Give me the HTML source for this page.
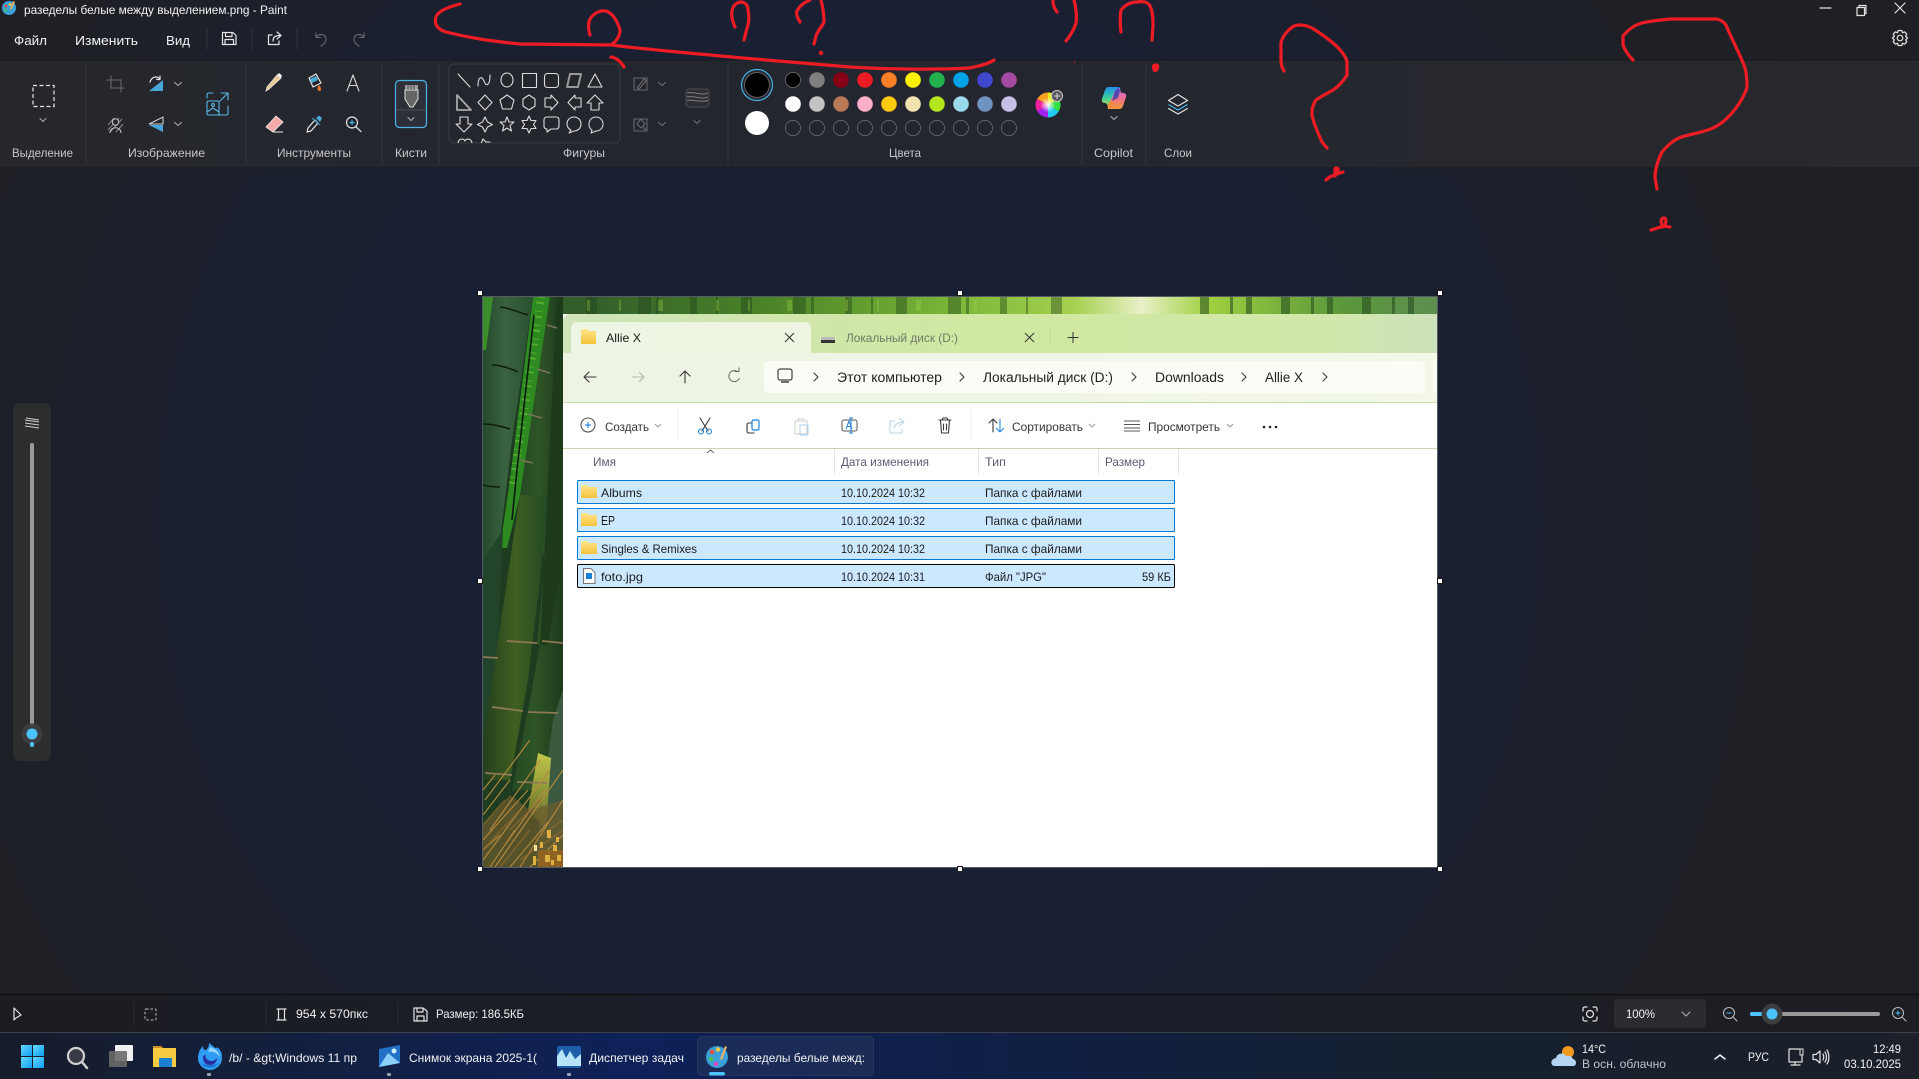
<!DOCTYPE html>
<html lang="ru"><head><meta charset="utf-8"><title>Paint</title>
<style>
html,body{margin:0;padding:0;background:#1c1f2a;overflow:hidden}
svg{display:block}
text{font-family:"Liberation Sans","Noto Sans CJK SC",sans-serif}
.w{fill:#f2f2f2;font-size:12px}
.l{fill:#c6c7ca;font-size:12px;text-anchor:start}
.e{fill:#1a1a1a;font-size:12px}
.ic{fill:none;stroke:#e4e4e4;stroke-width:1.2;stroke-linecap:round;stroke-linejoin:round}
.dim{fill:none;stroke:#66686c;stroke-width:1.1;stroke-linecap:round;stroke-linejoin:round}
.ch{fill:none;stroke:#a9abae;stroke-width:1.1;stroke-linecap:round;stroke-linejoin:round}
.sh{fill:none;stroke:#dcdcdc;stroke-width:1.1;stroke-linejoin:round;stroke-linecap:round}
.dk{fill:none;stroke:#3a3a3a;stroke-width:1.1;stroke-linecap:round;stroke-linejoin:round}
.lt{fill:none;stroke:#b8bcc0;stroke-width:1.1;stroke-linecap:round;stroke-linejoin:round}
.r{fill:none;stroke:#ed1c24;stroke-width:3.2;stroke-linecap:round;stroke-linejoin:round}
</style></head><body>
<svg width="1919" height="1079" viewBox="0 0 1919 1079" xmlns="http://www.w3.org/2000/svg">
<defs>
<radialGradient id="bg" gradientUnits="userSpaceOnUse" cx="850" cy="520" r="1080"><stop offset="0" stop-color="#181f36"/><stop offset=".5" stop-color="#1a2033"/><stop offset=".8" stop-color="#1d2027"/><stop offset="1" stop-color="#1f2024"/></radialGradient>
<linearGradient id="rib" x1="0" x2="1" y1="0" y2="0"><stop offset="0" stop-color="#25272c"/><stop offset=".5" stop-color="#23262f"/><stop offset="1" stop-color="#28292c"/></linearGradient>
<linearGradient id="stat" x1="0" x2="1" y1="0" y2="0"><stop offset="0" stop-color="#1b1d22"/><stop offset=".5" stop-color="#1a1e2a"/><stop offset="1" stop-color="#1d1e22"/></linearGradient>
<linearGradient id="task" x1="0" x2="1" y1="0" y2="0"><stop offset="0" stop-color="#171c2c"/><stop offset=".12" stop-color="#141f3a"/><stop offset=".33" stop-color="#0e2159"/><stop offset=".5" stop-color="#0f2048"/><stop offset=".75" stop-color="#16202f"/><stop offset="1" stop-color="#1b2029"/></linearGradient>
<linearGradient id="tabs" x1="0" x2="1" y1="0" y2="0"><stop offset="0" stop-color="#cfe4b8"/><stop offset=".5" stop-color="#d0e8a0"/><stop offset=".85" stop-color="#d2e8a8"/><stop offset="1" stop-color="#cde2ba"/></linearGradient>
<linearGradient id="nav" x1="0" x2="1" y1="0" y2="0"><stop offset="0" stop-color="#edf4e4"/><stop offset="1" stop-color="#f3f8e8"/></linearGradient>
<linearGradient id="acttab" x1="0" x2="1" y1="0" y2="0"><stop offset="0" stop-color="#edf5e4"/><stop offset="1" stop-color="#eef5e2"/></linearGradient>
<linearGradient id="strip" x1="0" x2="1" y1="0" y2="0"><stop offset="0" stop-color="#2f5428"/><stop offset=".12" stop-color="#34602a"/><stop offset=".3" stop-color="#4a8428"/><stop offset=".5" stop-color="#7cb838"/><stop offset=".62" stop-color="#a6d050"/><stop offset=".69" stop-color="#e8f0c8"/><stop offset=".76" stop-color="#a0d040"/><stop offset=".9" stop-color="#5a983a"/><stop offset="1" stop-color="#5d8e50"/></linearGradient>
<linearGradient id="st1" x1="0" x2="1" y1="0" y2="0"><stop offset="0" stop-color="#254a2c"/><stop offset=".45" stop-color="#3a6240"/><stop offset="1" stop-color="#2a5030"/></linearGradient>
<linearGradient id="st2" x1="0" x2="1" y1="0" y2="0"><stop offset="0" stop-color="#254a24"/><stop offset=".45" stop-color="#2f5426"/><stop offset="1" stop-color="#1c3a1c"/></linearGradient>
<linearGradient id="st3" x1="0" x2="1" y1="0" y2="0"><stop offset="0" stop-color="#233f1e"/><stop offset=".5" stop-color="#3f5f20"/><stop offset="1" stop-color="#234a24"/></linearGradient>
<linearGradient id="glow" x1="0" x2="0" y1="0" y2="1"><stop offset="0" stop-color="#c4c84a"/><stop offset="1" stop-color="#86862c" stop-opacity=".6"/></linearGradient>
<linearGradient id="folder" x1="0" x2="0" y1="0" y2="1"><stop offset="0" stop-color="#ffe58a"/><stop offset="1" stop-color="#f6c33c"/></linearGradient>
<linearGradient id="win" x1="0" x2="1" y1="0" y2="1"><stop offset="0" stop-color="#63dcff"/><stop offset="1" stop-color="#0f9bef"/></linearGradient>
<radialGradient id="wheelw"><stop offset="0" stop-color="#fff"/><stop offset=".85" stop-color="#fff" stop-opacity="0"/></radialGradient>
<linearGradient id="cp1" x1="0" x2="0" y1="0" y2="1"><stop offset="0" stop-color="#1f8ff0"/><stop offset=".5" stop-color="#3ccf9a"/><stop offset="1" stop-color="#f4d23a"/></linearGradient>
<linearGradient id="cp2" x1="0" x2="0" y1="0" y2="1"><stop offset="0" stop-color="#b06be8"/><stop offset=".5" stop-color="#f0708c"/><stop offset="1" stop-color="#f79a3a"/></linearGradient>
<clipPath id="cv"><rect x="483" y="297" width="80" height="570"/></clipPath>
<clipPath id="shp"><rect x="450" y="65" width="169" height="78" rx="4"/></clipPath>
</defs>

<rect width="1919" height="1079" fill="url(#bg)"/>

<!-- Title -->
<g>
<circle cx="9" cy="8" r="7" fill="#3aa0d8"/><circle cx="6" cy="6" r="1.4" fill="#f04a3a"/><circle cx="10" cy="4.500" r="1.4" fill="#f8c93a"/><circle cx="5.500" cy="10" r="1.4" fill="#4cc24c"/><path d="M13 1L15 2L11 10L10 9Z" fill="#e8b06a"/>
<text class="w" x="24" y="14" textLength="263" lengthAdjust="spacingAndGlyphs">разеделы белые между выделением.png - Paint</text>
<text class="w" x="14" y="45" style="font-size:13px" textLength="33" lengthAdjust="spacingAndGlyphs">Файл</text>
<text class="w" x="75" y="45" style="font-size:13px" textLength="63" lengthAdjust="spacingAndGlyphs">Изменить</text>
<text class="w" x="166" y="45" style="font-size:13px" textLength="24" lengthAdjust="spacingAndGlyphs">Вид</text>
<path d="M207 27V50M252 27V50M297 27V50" stroke="#303237"/>
<path class="ic" d="M222.500 32.500H233L236 35.500V44.500H222.500ZM225.500 32.500V36.500H232V32.500M225 44.500V39.500H233.500V44.500"/>
<path class="ic" d="M272 35H268.500V44.500H279V41M273 41C273 36.500 276 35.500 279.500 35.500M277 32L281 35.500L277 39"/>
<path class="dim" d="M316 33V37.500H320.500M316 37C319 33.500 326 33.500 326 39.500C326 42 324.500 44 321 46"/>
<path class="dim" d="M364 33V37.500H359.500M364 37C361 33.500 354 33.500 354 39.500C354 42 355.500 44 359 46"/>
<path class="ic" d="M1820 8H1831" stroke-width="1"/>
<path class="ic" d="M1857 7.500H1864.500V15.500H1857ZM1859 7.500V5.500H1866V13.500H1864.500"/>
<path class="ic" d="M1895 3L1905 13M1905 3L1895 13"/>
<g transform="translate(1900 38)"><circle r="2.800" class="ic"/><path class="ic" d="M-1.800-7.500H1.800L2.500-5.200L4.600-6.200L6.800-3.800L5.600-1.800L7.600 0L5.600 1.800L6.800 3.800L4.600 6.200L2.500 5.200L1.800 7.500H-1.800L-2.500 5.200L-4.600 6.200L-6.800 3.800L-5.600 1.800L-7.600 0L-5.600-1.800L-6.800-3.800L-4.600-6.200L-2.500-5.200Z"/></g>
</g>

<!-- Ribbon -->
<rect x="0" y="60" width="1919" height="108" fill="url(#rib)"/>
<path d="M0 60H1919M0 168H1919" stroke="#17181b"/>
<path d="M86 64V164M246 64V164M382 64V164M439 64V164M728 64V164M1082 64V164M1146 64V164" stroke="#34363c"/>
<g>
<text class="l" x="12" y="157" textLength="61" lengthAdjust="spacingAndGlyphs">Выделение</text>
<text class="l" x="128" y="157" textLength="77" lengthAdjust="spacingAndGlyphs">Изображение</text>
<text class="l" x="277" y="157" textLength="74" lengthAdjust="spacingAndGlyphs">Инструменты</text>
<text class="l" x="395" y="157" textLength="32" lengthAdjust="spacingAndGlyphs">Кисти</text>
<text class="l" x="563" y="157" textLength="42" lengthAdjust="spacingAndGlyphs">Фигуры</text>
<text class="l" x="889" y="157" textLength="32" lengthAdjust="spacingAndGlyphs">Цвета</text>
<text class="l" x="1094" y="157" textLength="39" lengthAdjust="spacingAndGlyphs">Copilot</text>
<text class="l" x="1164" y="157" textLength="28" lengthAdjust="spacingAndGlyphs">Слои</text>
</g>
<rect x="33" y="85.500" width="21" height="21" fill="none" stroke="#e6e6e6" stroke-width="1.200" stroke-dasharray="4 2.500"/>
<path class="ch" transform="translate(43 120)" d="M-3-1.500L0 1.500L3-1.500"/>
<!-- image group -->
<path class="dim" d="M107 80H121V92M111 76V88H124"/>
<path d="M149 91L163 80V91Z" fill="#4aa8d8"/><path class="ic" d="M150 82C152 76 157 76 160 79M160 76V79.500H156.500"/>
<path class="ch" transform="translate(178 84)" d="M-3.500-1.500L0 1.500L3.500-1.500"/>
<g fill="none" stroke="#8a8c90" stroke-width="1"><path d="M108 125L114 118M108 130L119 118M110 132L122 119M116 132L123 124"/><circle cx="115.500" cy="122" r="3.200" fill="#26282d" stroke="#c8c8c8"/><path stroke="#c8c8c8" d="M110 133C110 126 121 126 121 133"/></g>
<path d="M149 124L163 117V124Z" fill="none" stroke="#d8d8d8"/><path d="M149 125L163 125V132Z" fill="#4aa8d8"/>
<path class="ch" transform="translate(178 124)" d="M-3.500-1.500L0 1.500L3.500-1.500"/>
<g fill="none" stroke="#5ab8e8" stroke-width="1.100" stroke-linecap="round" stroke-linejoin="round"><path d="M207 98V95Q207 93 209 93H213M218 115H226Q228 115 228 113V106"/><path d="M221 93H228V100M228 93L220 101"/><rect x="207" y="101" width="12" height="14" rx="1.500"/><circle cx="213" cy="105" r="1.400"/><path d="M207 112L213 108L219 112"/></g>
<!-- tools -->
<path d="M269 89L266 91L267 87L277 75L281 78Z" fill="#e6c98c" stroke="#eee" stroke-width=".8"/><path d="M277 75L279 73L282 75.500L281 78Z" fill="#f0f0f0"/>
<path class="ic" d="M309 78L316 74L321 83L313 87Z" stroke-width="1"/><path d="M310 79L316 76L318 80L312 83Z" fill="#4aa8d8"/><path d="M319 85C316 89 318 91 319.500 91C321 91 322.500 89 319 85Z" fill="#f0762a"/>
<path class="lt" style="stroke:#d8d8d8" d="M347 91L353 75L359 91M349 85.500H357"/>
<path d="M266 127L276 116L283 122L273 132Z" fill="#f4a8a8" stroke="#eee" stroke-width=".8"/><path d="M273 132H283" stroke="#eee"/>
<path class="ic" d="M307 132L308 128L315 120L318 123L311 131Z"/><path d="M316 118L319 115.500L322 118L320 122Z" fill="#4aa8d8"/><path d="M312 118L320 125" stroke="#4aa8d8"/>
<circle cx="352" cy="122.500" r="5.500" class="ic"/><path class="ic" d="M356 127L361 131.500"/><path d="M349.500 122.500H354.500M352 120V125" stroke="#4ac2ff"/>
<!-- brushes -->
<rect x="395.500" y="80.500" width="31" height="47" rx="4" fill="#2d3038" stroke="#4ab4ea" stroke-width="1.200"/>
<path d="M396 110H426" stroke="#4a4c52"/>
<path d="M405 85H418V90H405Z" fill="#999"/><path d="M405 90H418V99L413 107H410L405 99Z" fill="#666" stroke="#e0e0e0" stroke-width="1"/><path d="M408 85V90M411 85V90M414 85V90" stroke="#555"/>
<path class="ch" transform="translate(411 119)" d="M-3-1.500L0 1.500L3-1.500"/>
<!-- shapes -->
<rect x="449" y="64" width="171" height="79" rx="5" fill="none" stroke="#3a3c42"/>
<g class="sh" clip-path="url(#shp)">
<path d="M458 74L470 87"/>
<path d="M478 86C478 76 482 76 484 81C486 87 490 86 490 75"/>
<ellipse cx="507" cy="80" rx="6" ry="7"/>
<rect x="522.500" y="73.500" width="14" height="14"/>
<rect x="544.500" y="73.500" width="14" height="14" rx="3"/>
<path d="M570 74H581L578 87H567Z" stroke="#999" stroke-width="2"/>
<path d="M595 74L602 87H588Z"/>
<path d="M457 95V110H471Z" stroke="#aaa" stroke-width="1.800"/>
<path d="M485 95L492 102.500L485 110L478 102.500Z"/>
<path d="M507 95L514 100L511.500 109H502.500L500 100Z"/>
<path d="M529 95L535 99V106L529 110L523 106V99Z"/>
<path d="M545 98H551V95L558 102.500L551 110V107H545Z"/>
<path d="M581 98H575V95L568 102.500L575 110V107H581Z"/>
<path d="M595 95L603 103H599V110H591V103H587Z"/>
<path d="M460 117H468V124H472L464 132L456 124H460Z"/>
<path d="M485 117L487.500 122L492.500 124.500L487.500 127L485 132L482.500 127L477.500 124.500L482.500 122Z"/>
<path d="M507 117L509 122H514L510 125.500L511.500 131L507 128L502.500 131L504 125.500L500 122H505Z"/>
<path d="M529 116L531 120.500H536L533.500 124.500L536 128.500H531L529 133L527 128.500H522L524.500 124.500L522 120.500H527Z"/>
<path d="M547 117H556Q559 117 559 120V126Q559 129 556 129H551L547 132V129Q544 129 544 126V120Q544 117 547 117Z"/>
<path d="M574 117C570 117 567 120 567 124C567 127 569 129 571 130L569 133L574 131C578 131 581 128 581 124C581 120 578 117 574 117Z"/>
<path d="M596 117C592 117 589 120 589 124C589 127 590 129 592 130L591 133L596 131C600 131 603 128 603 124C603 120 600 117 596 117Z" stroke-dasharray="2.500 1"/>
<path d="M458 144C458 138 464 138 465 141C466 138 472 138 472 144"/>
<path d="M480 146L483 139L486 142H490"/>
</g>
<path class="dim" d="M634 78H647V90H634ZM637 88L644 79L646 81L639 89Z"/>
<path class="ch" style="stroke:#6d6f73" transform="translate(662 84)" d="M-3.500-1.500L0 1.500L3.500-1.500"/>
<path class="dim" d="M634 119H647V131H634ZM637 124L641 119L645 124L641 128ZM644 127C643 129 645 130 646 129"/>
<path class="ch" style="stroke:#6d6f73" transform="translate(662 124)" d="M-3.500-1.500L0 1.500L3.500-1.500"/>
<rect x="686" y="89" width="23" height="18" rx="3" fill="#2c2e33" stroke="#4a4c50"/>
<path d="M687 93C694 91 700 96 708 93M687 97C694 95 700 100 708 97M687 100.500C694 99 700 103 708 100.500" fill="none" stroke="#7c7e82"/>
<path class="ch" style="stroke:#6d6f73" transform="translate(697 122)" d="M-3-1.500L0 1.500L3-1.500"/>
<!-- colours -->
<circle cx="757" cy="85" r="15.500" fill="none" stroke="#45b0e4" stroke-width="1.200"/><circle cx="757" cy="85" r="12.500" fill="#000" stroke="#606266" stroke-width="1"/>
<circle cx="757" cy="123" r="12" fill="#fff"/>
<g stroke="#5e6064" stroke-width="1">
<circle cx="793" cy="80" r="7.600" fill="#000"/><circle cx="817" cy="80" r="7.800" fill="#7f7f7f" stroke="none"/><circle cx="841" cy="80" r="7.800" fill="#880015" stroke="none"/><circle cx="865" cy="80" r="7.800" fill="#ed1c24" stroke="none"/><circle cx="889" cy="80" r="7.800" fill="#ff7f27" stroke="none"/><circle cx="913" cy="80" r="7.800" fill="#fff200" stroke="none"/><circle cx="937" cy="80" r="7.800" fill="#22b14c" stroke="none"/><circle cx="961" cy="80" r="7.800" fill="#00a2e8" stroke="none"/><circle cx="985" cy="80" r="7.800" fill="#3f48cc" stroke="none"/><circle cx="1009" cy="80" r="7.800" fill="#a349a4" stroke="none"/>
<circle cx="793" cy="104" r="7.800" fill="#fff" stroke="none"/><circle cx="817" cy="104" r="7.800" fill="#c3c3c3" stroke="none"/><circle cx="841" cy="104" r="7.800" fill="#b97a57" stroke="none"/><circle cx="865" cy="104" r="7.800" fill="#ffaec9" stroke="none"/><circle cx="889" cy="104" r="7.800" fill="#ffc90e" stroke="none"/><circle cx="913" cy="104" r="7.800" fill="#efe4b0" stroke="none"/><circle cx="937" cy="104" r="7.800" fill="#b5e61d" stroke="none"/><circle cx="961" cy="104" r="7.800" fill="#99d9ea" stroke="none"/><circle cx="985" cy="104" r="7.800" fill="#7092be" stroke="none"/><circle cx="1009" cy="104" r="7.800" fill="#c8bfe7" stroke="none"/>
<g fill="none"><circle cx="793" cy="128" r="7.600"/><circle cx="817" cy="128" r="7.600"/><circle cx="841" cy="128" r="7.600"/><circle cx="865" cy="128" r="7.600"/><circle cx="889" cy="128" r="7.600"/><circle cx="913" cy="128" r="7.600"/><circle cx="937" cy="128" r="7.600"/><circle cx="961" cy="128" r="7.600"/><circle cx="985" cy="128" r="7.600"/><circle cx="1009" cy="128" r="7.600"/></g>
</g>
<g transform="translate(1048 105)">
<path d="M0 0L0-12.500A12.500 12.500 0 0 1 10.800-6.200Z" fill="#e8ee20"/><path d="M0 0L10.800-6.200A12.500 12.500 0 0 1 10.800 6.200Z" fill="#30e040"/><path d="M0 0L10.800 6.200A12.500 12.500 0 0 1 0 12.500Z" fill="#20c8f0"/><path d="M0 0L0 12.500A12.500 12.500 0 0 1-10.800 6.200Z" fill="#a020f0"/><path d="M0 0L-10.800 6.200A12.500 12.500 0 0 1-10.800-6.200Z" fill="#f020a0"/><path d="M0 0L-10.800-6.200A12.500 12.500 0 0 1 0-12.500Z" fill="#f8a020"/><circle r="9" fill="url(#wheelw)"/>
</g>
<circle cx="1057" cy="96" r="5.500" fill="#55575a" stroke="#c8c8c8" stroke-width="1"/><path d="M1054 96H1060M1057 93V99" stroke="#d8d8d8"/>
<!-- copilot -->
<path d="M1109 87H1118Q1121 87 1120 90L1113 106Q1112 109 1108 109Q1108 103 1105 103Q1101 103 1102 99L1105 90Q1106 87 1109 87Z" fill="url(#cp1)"/>
<path d="M1119 109H1110Q1107 109 1108 106L1115 91Q1116 88 1120 88Q1120 93 1123 93Q1127 93 1126 97L1123 106Q1122 109 1119 109Z" fill="url(#cp2)"/>
<path d="M1115 91L1118 88L1120 90L1118 98L1112 101Z" fill="#2a3ca8" opacity=".75"/>
<path d="M1108 105L1112 100L1114 104L1111 109Z" fill="#f08a3a" opacity=".9"/>
<path class="ch" transform="translate(1114 118)" d="M-3-1.500L0 1.500L3-1.500"/>
<path class="ic" d="M1178 94.500L1187.500 100.500L1178 106L1168.500 100.500Z"/><path d="M1168.500 104.500L1178 110L1187.500 104.500" fill="none" stroke="#4ab4ea" stroke-width="1.200"/><path class="ic" d="M1168.500 108.500L1178 114L1187.500 108.500"/>

<!-- Slider panel -->
<rect x="13" y="403" width="38" height="358" rx="7" fill="#2c2d2f"/>
<path d="M25 420L39 422M25 423L39 425M25 426L39 428M26 418L39 420" stroke="#d0d0d0" stroke-width="1"/>
<rect x="30" y="443" width="4" height="290" rx="2" fill="#9a9a9a"/>
<circle cx="32" cy="734" r="10.500" fill="#3c3d3f"/><circle cx="32" cy="734" r="5.500" fill="#4cc2ff"/>
<rect x="30" y="742" width="4" height="5" rx="2" fill="#4cc2ff"/>

<!-- Canvas -->
<rect x="482.500" y="296.500" width="955" height="571" fill="#fff" stroke="#555a66"/>
<rect x="483" y="297" width="954" height="17" fill="url(#strip)"/>
<path d="M483 305.500H1100" stroke="#1f3f1c" stroke-width="17" stroke-dasharray="13 5 3 31 7 19 2 23 11 41" opacity=".4"/>
<path d="M490 305.500H1000" stroke="#a8d848" stroke-width="11" stroke-dasharray="2 37 5 53 3 29" opacity=".3"/>
<path d="M1200 305.500H1437" stroke="#234a1e" stroke-width="17" stroke-dasharray="9 21 3 13 6 29" opacity=".55"/>
<g clip-path="url(#cv)">
<rect x="483" y="297" width="80" height="570" fill="#1e3c20"/>
<!-- upper gap -->
<path d="M533 297H550L520 495L507 548H500L510 480Z" fill="#2c8a20"/>
<path d="M541 297L512 490" stroke="#8ed440" stroke-width="8" stroke-dasharray="1 4 2 7" opacity=".45"/>
<path d="M534 315L517 470L512 520" stroke="#0b1a0e" stroke-width="1.600" fill="none"/>
<!-- left stalk -->
<path d="M483 297H533L512 440L500 540L483 640Z" fill="url(#st1)"/>
<path d="M483 297H493L486 350H483Z" fill="#3a8e2a"/>
<!-- right upper stalk -->
<path d="M550 297H563V645H537L545 560L520 495Z" fill="url(#st2)"/>
<path d="M557 297H563V560L548 645H540Z" fill="#1d3a1a"/>
<g stroke="#0f1c0d" stroke-width="1.500" fill="none"><path d="M500 307C510 308 520 313 528 315M492 365C500 365 512 369 518 372M483 424C495 424 503 427 510 429M483 485C490 487 495 487 500 487"/></g>
<g stroke="#7a7458" stroke-width="1.500" fill="none"><path d="M547 325L557 328M537 369L550 373M528 414L542 418M520 460L533 463"/></g>
<!-- lower stalks -->
<path d="M520 495H547L540 580L528 680L510 780H483V740L498 640Z" fill="url(#st3)"/>
<path d="M483 560L503 530L498 640L483 740Z" fill="#22442a"/>
<path d="M540 645H563V700L550 790H512L530 700Z" fill="url(#st2)"/>
<path d="M553 720L563 690V860H535Z" fill="#3c5a40"/>
<path d="M528 810L538 753L551 758L546 830Z" fill="url(#glow)"/>
<g stroke="#8c7a54" stroke-width="1.800" fill="none"><path d="M507 641L537 643M542 641L563 643M483 657L498 658M492 707L523 711M528 712L558 713M485 773L512 775M517 782L547 783"/></g>
<!-- grass -->
<path d="M483 825L510 795L530 810L563 800V867H483Z" fill="#6c5a2c" opacity=".7"/>
<g stroke="#b58a40" stroke-width="1.100" fill="none"><path d="M485 800L530 740M490 830L540 760M483 860L550 770M500 860L563 770M520 867L563 800M483 815L510 780M495 867L535 810M483 840L528 790M510 867L550 820M483 790L495 775M490 867L515 830M483 850L500 835M505 845L545 790M530 867L563 835"/></g>
<g stroke="#8c6a30" stroke-width="2" fill="none" opacity=".6"><path d="M483 850L520 810M500 867L530 830M535 840L563 820M520 860L563 830M483 825L505 800M510 830L540 800"/></g>
<rect x="538" y="850" width="25" height="17" fill="#8e6220"/>
<g fill="#e0b040"><rect x="547" y="830" width="4" height="8"/><rect x="540" y="842" width="3" height="6"/><rect x="553" y="845" width="4" height="6"/><rect x="545" y="855" width="5" height="7"/><rect x="556" y="837" width="3" height="5"/><rect x="533" y="856" width="3" height="9"/><rect x="534" y="845" width="3" height="6" fill="#f4e0a0"/><rect x="557" y="855" width="4" height="6"/><rect x="551" y="860" width="3" height="5"/></g>
</g>
<!-- Explorer -->
<path d="M563 322Q563 314 571 314H1437V353H563Z" fill="url(#tabs)"/>
<path d="M571 353V329Q571 322 578 322H804Q811 322 811 329V353Z" fill="url(#acttab)"/>
<rect x="563" y="353" width="874" height="49" fill="url(#nav)"/>
<rect x="764" y="361" width="661" height="32" rx="4" fill="#fafcf5"/>
<rect x="1433" y="361" width="4" height="32" fill="#fafcf5"/>
<path d="M563 402.500H1437" stroke="#c8dca8"/>
<rect x="563" y="403" width="874" height="464" fill="#fff"/>
<path d="M563 448.500H1437" stroke="#c9d5ae"/>
<path d="M581 331Q581 329 583 329H587L589 331H596V344H581Z" fill="url(#folder)"/>
<text class="e" x="606" y="342" textLength="35" lengthAdjust="spacingAndGlyphs">Allie X</text>
<path d="M785 333L794 342M794 333L785 342" stroke="#333" fill="none"/>
<rect x="821" y="337" width="14" height="3" rx="1" fill="#bbb"/><rect x="821" y="340" width="14" height="3" fill="#333"/>
<text x="846" y="342" style="font-size:12px;fill:#6f7a66" textLength="112" lengthAdjust="spacingAndGlyphs">Локальный диск (D:)</text>
<path d="M1025 333L1034 342M1034 333L1025 342" stroke="#333" fill="none"/>
<path d="M1050 329V345" stroke="#c2d89c"/>
<path d="M1073 332V343M1067.500 337.500H1078.500" stroke="#333" fill="none"/>
<path class="dk" d="M584 377H596M584 377L589 372M584 377L589 382"/>
<path d="M632 377H644M644 377L639 372M644 377L639 382" fill="none" stroke="#b4b8b0" stroke-width="1.100"/>
<path class="dk" d="M685 383V371M685 371L680 376M685 371L690 376"/>
<path d="M738 372A5.500 5.500 0 1 0 739.500 378M734.500 371.500H739V367.500" fill="none" stroke="#666" stroke-width="1"/>
<rect x="778" y="369" width="14" height="11" rx="2" fill="none" stroke="#444" stroke-width="1.200"/><path d="M781 382H789" stroke="#444" stroke-width="1.500"/>
<g class="dk"><path d="M814 373L818 377L814 381M960 373L964 377L960 381M1132 373L1136 377L1132 381M1242 373L1246 377L1242 381M1323 373L1327 377L1323 381"/></g>
<text x="837" y="382" style="font-size:13.500px;fill:#222" textLength="105" lengthAdjust="spacingAndGlyphs">Этот компьютер</text>
<text x="983" y="382" style="font-size:13.500px;fill:#222" textLength="130" lengthAdjust="spacingAndGlyphs">Локальный диск (D:)</text>
<text x="1155" y="382" style="font-size:13.500px;fill:#222" textLength="69" lengthAdjust="spacingAndGlyphs">Downloads</text>
<text x="1265" y="382" style="font-size:13.500px;fill:#222" textLength="38" lengthAdjust="spacingAndGlyphs">Allie X</text>
<!-- toolbar -->
<circle cx="588" cy="425" r="7" fill="none" stroke="#555" stroke-width="1.100"/><path d="M585 425H591M588 422V428" stroke="#0a74d4" fill="none"/>
<text class="e" x="605" y="431" style="fill:#333" textLength="44" lengthAdjust="spacingAndGlyphs">Создать</text>
<path d="M655 424L658 427L661 424" fill="none" stroke="#999"/>
<path d="M678 410V441M971 410V441" stroke="#ececec"/>
<path class="dk" d="M700 418L708 431M710 418L702 431"/><circle cx="701" cy="431.500" r="2.500" fill="none" stroke="#1a80d8"/><circle cx="709" cy="431.500" r="2.500" fill="none" stroke="#1a80d8"/>
<rect x="752" y="420" width="7" height="10" rx="1.500" fill="none" stroke="#1a80d8" stroke-width="1.200"/><path class="dk" d="M751 423H749Q747 423 747 425V431Q747 433 749 433H754"/>
<path d="M795 421H807V434H795ZM798 421V419H804V421" fill="none" stroke="#ccd0d0"/><rect x="800" y="425" width="8" height="10" rx="1" fill="none" stroke="#a8d0f0"/>
<rect x="842" y="420" width="15" height="11" rx="2" fill="none" stroke="#555"/><path d="M846 429L849 421L852 429M847 426.500H851" fill="none" stroke="#1a80d8"/><path d="M851 418V433M849 418H853M849 433H853" stroke="#1a80d8" fill="none"/>
<path d="M890 421H895M890 421V433H902V429M894 428C895 424 899 422 903 422M899 418L904 422L899 426" fill="none" stroke="#bcd4e8" stroke-width="1.100"/>
<path class="dk" d="M939 420H951M942 420L943 418H947L948 420M940.500 420L941.500 433H948.500L949.500 420M943.500 424V430M946.500 424V430" stroke-width="1"/>
<path class="dk" d="M993 420V432M993 419L989 423M993 419L997 423"/><path d="M1000 419V431M1000 432L996 428M1000 432L1004 428" fill="none" stroke="#1a80d8"/>
<text class="e" x="1012" y="431" style="fill:#333" textLength="71" lengthAdjust="spacingAndGlyphs">Сортировать</text>
<path d="M1089 424L1092 427L1095 424" fill="none" stroke="#999"/>
<path d="M1124 421H1140M1124 424.500H1140M1124 428H1140M1124 431H1140" stroke="#555" fill="none"/>
<text class="e" x="1148" y="431" style="fill:#333" textLength="72" lengthAdjust="spacingAndGlyphs">Просмотреть</text>
<path d="M1227 424L1230 427L1233 424" fill="none" stroke="#999"/>
<circle cx="1264" cy="427" r="1.300" fill="#222"/><circle cx="1270" cy="427" r="1.300" fill="#222"/><circle cx="1276" cy="427" r="1.300" fill="#222"/>
<!-- header -->
<path d="M707 453L710.500 450L714 453" fill="none" stroke="#666"/>
<path d="M834.500 449V474M978.500 449V474M1098.500 449V474M1178.500 449V474" stroke="#e2e4de"/>
<text x="593" y="466" style="font-size:12px;fill:#5a5c70" textLength="23" lengthAdjust="spacingAndGlyphs">Имя</text>
<text x="841" y="466" style="font-size:12px;fill:#5a5c70" textLength="88" lengthAdjust="spacingAndGlyphs">Дата изменения</text>
<text x="985" y="466" style="font-size:12px;fill:#5a5c70" textLength="21" lengthAdjust="spacingAndGlyphs">Тип</text>
<text x="1105" y="466" style="font-size:12px;fill:#5a5c70" textLength="40" lengthAdjust="spacingAndGlyphs">Размер</text>
<!-- rows -->
<rect x="577.500" y="480.500" width="597" height="23" rx="1" fill="#cce8ff" stroke="#0078d7"/>
<rect x="577.500" y="508.500" width="597" height="23" rx="1" fill="#cce8ff" stroke="#0078d7"/>
<rect x="577.500" y="536.500" width="597" height="23" rx="1" fill="#cce8ff" stroke="#0078d7"/>
<rect x="577.500" y="564.500" width="597" height="23" rx="1" fill="#cce8ff" stroke="#000"/>
<path d="M581 487Q581 485 583 485H587L589 487H597V498H581Z" fill="url(#folder)"/>
<path d="M581 515Q581 513 583 513H587L589 515H597V526H581Z" fill="url(#folder)"/>
<path d="M581 543Q581 541 583 541H587L589 543H597V554H581Z" fill="url(#folder)"/>
<path d="M583.500 568.500H591L595 572.500V583.500H583.500Z" fill="#fff" stroke="#777"/><rect x="586" y="573" width="6" height="6" fill="#1a80d8"/>
<text class="e" x="601" y="497" textLength="41" lengthAdjust="spacingAndGlyphs">Albums</text>
<text class="e" x="601" y="525" textLength="14" lengthAdjust="spacingAndGlyphs" style="font-size:13px">EP</text>
<text class="e" x="601" y="553" textLength="96" lengthAdjust="spacingAndGlyphs">Singles &amp; Remixes</text>
<text class="e" x="601" y="581" textLength="42" lengthAdjust="spacingAndGlyphs">foto.jpg</text>
<text class="e" x="841" y="497" textLength="84" lengthAdjust="spacingAndGlyphs">10.10.2024 10:32</text>
<text class="e" x="841" y="525" textLength="84" lengthAdjust="spacingAndGlyphs">10.10.2024 10:32</text>
<text class="e" x="841" y="553" textLength="84" lengthAdjust="spacingAndGlyphs">10.10.2024 10:32</text>
<text class="e" x="841" y="581" textLength="84" lengthAdjust="spacingAndGlyphs">10.10.2024 10:31</text>
<text class="e" x="985" y="497" textLength="97" lengthAdjust="spacingAndGlyphs">Папка с файлами</text>
<text class="e" x="985" y="525" textLength="97" lengthAdjust="spacingAndGlyphs">Папка с файлами</text>
<text class="e" x="985" y="553" textLength="97" lengthAdjust="spacingAndGlyphs">Папка с файлами</text>
<text class="e" x="985" y="581" textLength="61" lengthAdjust="spacingAndGlyphs">Файл "JPG"</text>
<text class="e" x="1142" y="581" textLength="29" lengthAdjust="spacingAndGlyphs">59 КБ</text>
<!-- handles -->
<g fill="#fff" stroke="#1a1a1a">
<rect x="477.500" y="290.500" width="5" height="5"/><rect x="957.500" y="290.500" width="5" height="5"/><rect x="1437.500" y="290.500" width="5" height="5"/>
<rect x="477.500" y="578.500" width="5" height="5"/><rect x="1437.500" y="578.500" width="5" height="5"/>
<rect x="477.500" y="866.500" width="5" height="5"/><rect x="957.500" y="866.500" width="5" height="5"/><rect x="1437.500" y="866.500" width="5" height="5"/>
</g>

<!-- Scribbles -->
<g class="r">
<path d="M460 4C448 7 438 11 436 17C434 24 437 29 446 32C470 38 490 41 520 44L611 45C650 50 690 53 743 58C770 60 800 63 850 67C880 69 930 70 969 68C980 66 988 64 994 60"/>
<path d="M590 35C588 28 588 23 590 19C594 13 600 10 606 11C612 13 617 20 620 30C620 36 616 42 611 45"/>
<path d="M611 57C617 58 621 62 624 67"/>
<path d="M735 27C732 20 731 15 732 11C733 5 737 2 742 2C746 3 748 6 748 10C750 20 748 25 746 32L744 40"/>
<path d="M800 22C797 17 796 13 797 11C800 5 805 2 810 0M821 0C823 8 824 15 824 22C821 28 817 32 816 36L814 44"/>
<circle cx="821" cy="53" r="1" stroke-width="2.500"/>
<path d="M1057 12C1054 8 1053 5 1053 1M1074 0C1076 8 1077 16 1076 23C1074 30 1070 36 1066 41"/>
<path d="M1121 32C1120 24 1120 16 1121 10C1126 4 1132 2 1137 2C1143 1 1148 2 1150 6C1153 12 1153 20 1153 26L1152 40"/>
<path d="M1154 66C1156 65 1158 65 1157 68C1156 71 1154 71 1154 67" stroke-width="4"/>
<path d="M1074 62H1075" stroke-width="1"/>
<path d="M1284 71C1282 68 1281 64 1281 60L1281 42C1284 34 1288 30 1294 26C1300 24 1306 25 1312 28C1320 33 1327 38 1333 43C1341 50 1346 56 1347 62V75C1342 83 1338 87 1333 90C1326 94 1320 97 1316 100C1312 106 1312 110 1312 115C1314 125 1318 133 1322 142L1327 148"/>
<path d="M1326 180C1330 176 1334 175 1343 172M1335 176L1335 169C1336 167 1339 168 1338 171" stroke-width="3.200"/>
<path d="M1633 60C1628 55 1625 50 1623 45V36C1628 30 1634 25 1642 23C1650 21 1660 20 1670 19H1717C1721 20 1724 22 1726 25C1733 42 1741 56 1745 68C1747 75 1747 82 1747 88C1743 98 1739 104 1736 108C1730 116 1722 124 1713 128C1705 132 1695 133 1685 136C1675 138 1668 145 1662 152C1658 160 1655 170 1655 178L1657 189"/>
<path d="M1651 230C1656 229 1662 225 1670 227M1663 226C1660 222 1661 218 1664 218C1667 218 1666 224 1664 226" stroke-width="3.200"/>
</g>

<!-- Status bar -->
<rect x="0" y="994" width="1919" height="38" fill="url(#stat)"/>
<path d="M0 994.500H1919" stroke="#121316" stroke-width="2"/>
<path d="M134 1002V1026M266 1002V1026M398 1002V1026" stroke="#2a2c32"/>
<path class="ic" d="M14 1008V1020L16 1018L21 1015Z" stroke-width="1"/>
<rect x="145" y="1009" width="11" height="11" rx="1" fill="none" stroke="#c0c0c0" stroke-dasharray="2.500 2"/>
<path class="ic" d="M277 1009H286M277 1020H286M278.500 1009V1020M284.500 1009V1020" stroke-width="1"/>
<text class="w" x="296" y="1018" textLength="72" lengthAdjust="spacingAndGlyphs">954 x 570пкс</text>
<path class="ic" d="M414 1008H423L427 1011V1021H414ZM417 1008V1012H423V1008M417 1021V1016H424V1021" stroke-width="1"/>
<text class="w" x="436" y="1018" textLength="88" lengthAdjust="spacingAndGlyphs">Размер: 186.5КБ</text>
<path class="ic" d="M1583 1011V1009Q1583 1007 1585 1007H1587M1593 1007H1595Q1597 1007 1597 1009V1011M1597 1017V1019Q1597 1021 1595 1021H1593M1587 1021H1585Q1583 1021 1583 1019V1017" stroke-width="1"/><circle cx="1590" cy="1014" r="3.500" class="ic"/>
<rect x="1614" y="999" width="92" height="29" rx="4" fill="#2a2c31"/>
<text class="w" x="1626" y="1018" textLength="29" lengthAdjust="spacingAndGlyphs">100%</text>
<path class="ch" transform="translate(1686 1014)" d="M-4-2L0 2L4-2"/>
<circle cx="1729" cy="1013" r="5.500" class="lt"/><path class="lt" d="M1733 1017L1737 1021"/><path d="M1726.500 1013H1731.500" stroke="#4cc2ff"/>
<rect x="1750" y="1012" width="130" height="4" rx="2" fill="#9a9a9a"/><rect x="1750" y="1012" width="20" height="4" rx="2" fill="#4cc2ff"/>
<circle cx="1772" cy="1014" r="10.500" fill="#3c3d3f"/><circle cx="1772" cy="1014" r="5.500" fill="#4cc2ff"/>
<circle cx="1898" cy="1013" r="5.500" class="lt"/><path class="lt" d="M1902 1017L1906 1021"/><path d="M1895.500 1013H1900.500M1898 1010.500V1015.500" stroke="#4cc2ff"/>

<!-- Taskbar -->
<rect x="0" y="1032" width="1919" height="47" fill="url(#task)"/>
<path d="M0 1032.500H1919" stroke="#3c4048"/>
<g fill="url(#win)"><rect x="21" y="1045" width="11" height="11"/><rect x="33" y="1045" width="11" height="11"/><rect x="21" y="1057" width="11" height="11"/><rect x="33" y="1057" width="11" height="11"/></g>
<circle cx="76" cy="1056" r="8" fill="#363a46" stroke="#d0d0d0" stroke-width="2.200"/><path d="M82 1062L87 1068" stroke="#d0d0d0" stroke-width="2.500" stroke-linecap="round"/>
<rect x="115" y="1045" width="18" height="16" rx="1" fill="#f0f0f0"/><rect x="109" y="1051" width="18" height="16" rx="1" fill="#6a6a6a" opacity=".9"/>
<path d="M153 1046H161L163 1048H176V1067H153Z" fill="#f8cc40"/><path d="M153 1046H161L163 1048H153Z" fill="#c8902a"/><rect x="159" y="1058" width="13" height="9" rx="1" fill="#1a80d0"/>
<!-- firefox -->
<path d="M198 1058C198 1052 201 1048 203 1046C203 1049 204 1050 206 1050C209 1047 209 1045 209 1043C212 1045 214 1047 215 1048C217 1047 219 1048 220 1050C222 1053 222 1055 222 1058C222 1065 216 1070 210 1070C204 1070 198 1065 198 1058Z" fill="#2f9cf4"/>
<path d="M210 1047C215 1048 219 1052 220 1057C216 1052 212 1051 208 1052Z" fill="#8ed4ff"/>
<path d="M203 1058C203 1062 206 1065 210 1065C214 1065 217 1062 217 1058C215 1061 211 1062 208 1060C206 1059 205 1057 206 1055C204 1055 203 1056 203 1058Z" fill="#2a2fa0"/>
<path d="M201 1063C205 1069 215 1069 219 1063C215 1066 206 1066 201 1063Z" fill="#1a6fd0"/>
<text class="w" x="229" y="1062" textLength="128" lengthAdjust="spacingAndGlyphs">/b/ - &amp;gt;Windows 11 пр</text>
<rect x="207" y="1073" width="4" height="3" rx="1" fill="#9aa0ac"/>
<path d="M379 1049L400 1045V1063L379 1067Z" fill="#2272c8"/>
<path d="M379 1067L388 1053L400 1063Z" fill="#8ad0fa"/><circle cx="394" cy="1051" r="2.500" fill="#cfeeff"/>
<text class="w" x="409" y="1062" textLength="128" lengthAdjust="spacingAndGlyphs">Снимок экрана 2025-1(</text>
<rect x="387" y="1073" width="4" height="3" rx="1" fill="#9aa0ac"/>
<rect x="557" y="1046" width="24" height="22" rx="2" fill="#1e5ea8"/><path d="M557 1066V1056L562 1049L566 1058L570 1051L575 1059L581 1054V1066Z" fill="#b8e4fa"/>
<text class="w" x="589" y="1062" textLength="95" lengthAdjust="spacingAndGlyphs">Диспетчер задач</text>
<rect x="567" y="1073" width="4" height="3" rx="1" fill="#9aa0ac"/>
<rect x="697.500" y="1036.500" width="176" height="39" rx="4" fill="#2a3a5e" fill-opacity=".45" stroke="#3c4a6c" stroke-opacity=".45"/>
<circle cx="717" cy="1057" r="11" fill="#3aa0d8"/><circle cx="712" cy="1052" r="2.200" fill="#f04a3a"/><circle cx="718" cy="1049.500" r="2.200" fill="#f8c93a"/><circle cx="711" cy="1059" r="2.200" fill="#4cc24c"/><circle cx="716" cy="1064" r="2.200" fill="#e04ac0"/><path d="M725 1046L727 1047L722 1060L720 1059Z" fill="#e8b06a"/>
<text class="w" x="737" y="1062" textLength="128" lengthAdjust="spacingAndGlyphs">разеделы белые межд:</text>
<rect x="709" y="1072" width="16" height="3.500" rx="1.700" fill="#4cc2ff"/>
<!-- tray -->
<circle cx="1568" cy="1052" r="6" fill="#f09a20"/>
<path d="M1555 1066C1550 1066 1550 1059 1556 1058C1557 1053 1564 1052 1566 1056C1570 1055 1572 1057 1573 1059C1577 1060 1577 1066 1573 1066Z" fill="#b4d4f4"/>
<text class="w" x="1582" y="1053" textLength="24" lengthAdjust="spacingAndGlyphs">14°C</text>
<text x="1582" y="1068" style="font-size:12px;fill:#c0c4ca" textLength="84" lengthAdjust="spacingAndGlyphs">В осн. облачно</text>
<path d="M1715 1059L1720 1055L1725 1059" fill="none" stroke="#f0f0f0" stroke-width="1.600" stroke-linecap="round"/>
<text class="w" x="1748" y="1061" textLength="21" lengthAdjust="spacingAndGlyphs">РУС</text>
<path class="ic" d="M1799 1049H1789V1062H1802V1056M1795 1062V1065M1791 1065H1800" stroke-width="1.100"/><rect x="1800" y="1049" width="3" height="6" fill="none" stroke="#e4e4e4"/>
<path class="ic" d="M1813 1054.500H1816L1820 1051V1063L1816 1059.500H1813ZM1823 1054C1824 1056 1824 1058 1823 1060M1825 1052C1827 1055 1827 1059 1825 1062M1827 1050C1829.500 1054 1829.500 1060 1827 1064" stroke-width="1"/>
<text class="w" x="1873" y="1053" textLength="28" lengthAdjust="spacingAndGlyphs">12:49</text>
<text class="w" x="1844" y="1068" textLength="57" lengthAdjust="spacingAndGlyphs">03.10.2025</text>
</svg>
</body></html>
